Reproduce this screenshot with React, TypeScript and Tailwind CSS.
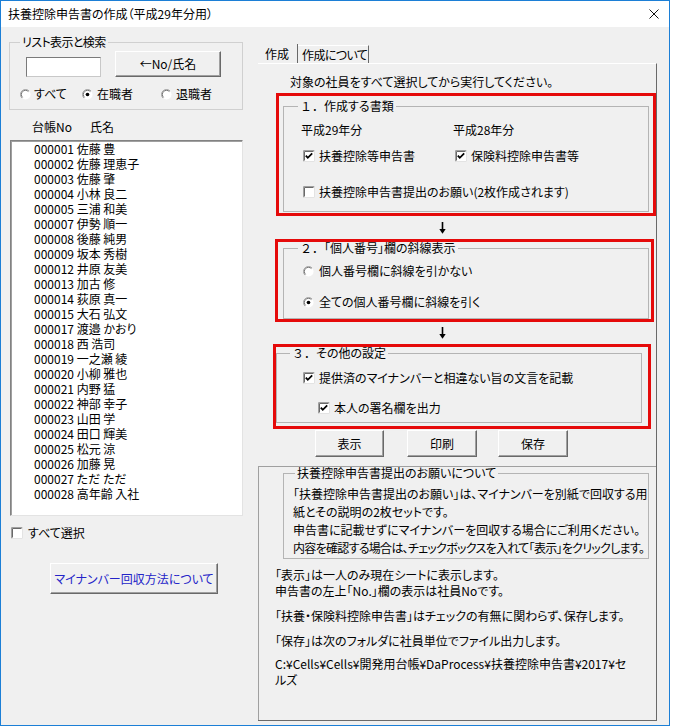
import React from 'react';

const employees: [string, string][] = [
  ['000001', '佐藤 豊'],
  ['000002', '佐藤 理恵子'],
  ['000003', '佐藤 肇'],
  ['000004', '小林 良二'],
  ['000005', '三浦 和美'],
  ['000007', '伊勢 順一'],
  ['000008', '後藤 純男'],
  ['000009', '坂本 秀樹'],
  ['000012', '井原 友美'],
  ['000013', '加古 修'],
  ['000014', '荻原 真一'],
  ['000015', '大石 弘文'],
  ['000017', '渡邉 かおり'],
  ['000018', '西 浩司'],
  ['000019', '一之瀬 綾'],
  ['000020', '小柳 雅也'],
  ['000021', '内野 猛'],
  ['000022', '神部 幸子'],
  ['000023', '山田 学'],
  ['000024', '田口 輝美'],
  ['000025', '松元 涼'],
  ['000026', '加藤 晃'],
  ['000027', 'ただ ただ'],
  ['000028', '高年齢 入社'],
];

const CheckBox: React.FC<{ checked?: boolean }> = ({ checked }) => (
  <svg width="12" height="12" viewBox="0 0 12 12" className="shrink-0">
    <rect x="0" y="0" width="12" height="12" fill="#ffffff" />
    <path d="M0.5 11.5V0.5H11.5" stroke="#a0a0a0" fill="none" />
    <path d="M1.5 10.5V1.5H10.5" stroke="#696969" fill="none" />
    <path d="M0.5 11.5H11.5V0.5" stroke="#e3e3e3" fill="none" />
    {checked && <path d="M2.8 5.6L4.8 7.8L9.2 3.4" stroke="#000000" strokeWidth="1.8" fill="none" />}
  </svg>
);

const Radio: React.FC<{ checked?: boolean }> = ({ checked }) => (
  <svg width="11" height="11" viewBox="0 0 12 12" className="shrink-0">
    <circle cx="6" cy="6" r="5.5" fill="#ffffff" />
    <path d="M2.1 9.9A5.5 5.5 0 0 1 9.9 2.1" stroke="#a0a0a0" fill="none" />
    <path d="M2.8 9.2A4.5 4.5 0 0 1 9.2 2.8" stroke="#696969" fill="none" />
    {checked && <circle cx="6" cy="6" r="2" fill="#000000" />}
  </svg>
);

const DownArrow = () => (
  <svg width="9" height="12" viewBox="0 0 9 12" className="ml-[180px]">
    <path d="M4.5 0V8" stroke="#000000" strokeWidth="1.6" />
    <path d="M1.3 7H7.7L4.5 11.8Z" fill="#000000" />
  </svg>
);

const Btn: React.FC<{ className?: string; children: React.ReactNode }> = ({ className, children }) => (
  <div
    className={`flex items-center justify-center bg-[#f0f0f0] border border-t-white border-l-white border-r-[#696969] border-b-[#696969] shadow-[inset_-1px_-1px_0_#a0a0a0] whitespace-nowrap ${className ?? ''}`}
  >
    {children}
  </div>
);

const Row: React.FC<{ className?: string; children: React.ReactNode }> = ({ className, children }) => (
  <div className={`flex items-center h-[14px] leading-[14px] whitespace-nowrap ${className ?? ''}`}>{children}</div>
);

export default function App() {
  return (
    <div className="w-[673px] h-[728px] bg-white overflow-hidden text-[12px] text-black font-['Noto_Sans_CJK_JP','Noto_Sans',sans-serif] [font-feature-settings:'palt']">
      <div className="w-[670px] h-[726px] border border-[#1c7fd6] bg-[#f0f0f0] flex flex-col">
        {/* title bar */}
        <div className="h-[26px] bg-white flex items-center justify-between pl-[7px] pr-[10px] shrink-0">
          <span className="leading-[14px]">扶養控除申告書の作成（平成29年分用）</span>
          <svg width="10" height="10" viewBox="0 0 10 10">
            <path d="M0.5 0.5L9.5 9.5M9.5 0.5L0.5 9.5" stroke="#111111" strokeWidth="1" />
          </svg>
        </div>

        <div className="flex flex-1">
          {/* left column */}
          <div className="ml-[8px] w-[234px] flex flex-col">
            <fieldset className="mt-[8px] border border-[#d0d0d0] pb-[8px]">
              <legend className="ml-[10px] px-[2px] leading-[14px] tracking-[-0.6px]">リスト表示と検索</legend>
              <div className="flex items-start mt-[2px]">
                <div className="ml-[16px] mt-[6px] w-[75px] h-[20px] bg-white border border-t-[#7a7a7a] border-l-[#7a7a7a] border-r-[#c8c8c8] border-b-[#c8c8c8]" />
                <Btn className="ml-[14px] w-[106px] h-[26px]">←No/氏名</Btn>
              </div>
              <Row className="mt-[10px]">
                <div className="ml-[10px] w-[62px] flex items-center gap-[3px]">
                  <Radio />
                  <span>すべて</span>
                </div>
                <div className="w-[79px] flex items-center gap-[4px]">
                  <Radio checked />
                  <span>在職者</span>
                </div>
                <div className="flex items-center gap-[4px]">
                  <Radio />
                  <span>退職者</span>
                </div>
              </Row>
            </fieldset>

            <Row className="mt-[10px] pl-[23px]">
              <span className="w-[58px]">台帳No</span>
              <span>氏名</span>
            </Row>

            <div className="mt-[6px] ml-[1px] w-[233px] h-[376px] bg-white border border-t-[#828282] border-l-[#828282] border-r-[#e3e3e3] border-b-[#e3e3e3] shadow-[inset_1px_1px_0_#a0a0a0] pl-[23px]">
              {employees.map(([no, name]) => (
                <div key={no} className="h-[15px] leading-[15px] whitespace-nowrap">
                  {no} {name}
                </div>
              ))}
            </div>

            <Row className="mt-[10px] ml-[2px] gap-[5px]">
              <CheckBox />
              <span>すべて選択</span>
            </Row>

            <Btn className="mt-[23px] ml-[41px] w-[168px] h-[31px] text-[#2424c8]">マイナンバー回収方法について</Btn>
          </div>

          {/* right column */}
          <div className="ml-[15px] w-[399px] flex flex-col">
            <div className="mt-[17px] h-[19px] flex items-end whitespace-nowrap">
              <div className="w-[40px] h-[19px] pl-[7px] leading-[19px] border-r border-r-[#696969]">作成</div>
              <div className="w-[71px] h-[18px] pl-[4px] leading-[18px] tracking-[-0.6px] border-t border-t-white border-r border-r-[#696969]">作成について</div>
            </div>

            <div className="h-[658px] flex flex-col border-t border-t-white border-r border-r-[#696969] border-b border-b-[#696969]">
              <Row className="mt-[11px] pl-[32px]">対象の社員をすべて選択してから実行してください。</Row>

              {/* 1 */}
              <div className="mt-[4px] ml-[18px] w-[380px] h-[123px] border-[3px] border-[#e50a0a]">
                <fieldset className="mt-[3px] ml-[4px] w-[366px] border border-[#b4b4b4] pb-[12px]">
                  <legend className="ml-[14px] px-[2px] leading-[14px]">
                    <span className="[font-feature-settings:normal]">１．</span>作成する書類
                  </legend>
                  <Row className="mt-[10px] pl-[17px]">
                    <span className="w-[152px]">平成29年分</span>
                    <span>平成28年分</span>
                  </Row>
                  <Row className="mt-[12px] pl-[19px]">
                    <div className="w-[152px] flex items-center gap-[4px]">
                      <CheckBox checked />
                      <span>扶養控除等申告書</span>
                    </div>
                    <div className="flex items-center gap-[4px]">
                      <CheckBox checked />
                      <span>保険料控除申告書等</span>
                    </div>
                  </Row>
                  <Row className="mt-[22px] pl-[19px] gap-[4px]">
                    <CheckBox />
                    <span>扶養控除申告書提出のお願い(2枚作成されます)</span>
                  </Row>
                </fieldset>
              </div>

              <div className="mt-[6px] h-[12px] flex">
                <DownArrow />
              </div>

              {/* 2 */}
              <div className="mt-[5px] ml-[17px] w-[379px] h-[83px] border-[3px] border-[#e50a0a]">
                <fieldset className="ml-[5px] w-[366px] border border-[#b4b4b4] pb-[9px]">
                  <legend className="ml-[14px] px-[2px] leading-[12px]">
                    <span className="[font-feature-settings:normal]">２．</span>「個人番号」欄の斜線表示
                  </legend>
                  <Row className="mt-[10px] pl-[19px] gap-[5px]">
                    <Radio />
                    <span>個人番号欄に斜線を引かない</span>
                  </Row>
                  <Row className="mt-[17px] pl-[19px] gap-[5px]">
                    <Radio checked />
                    <span>全ての個人番号欄に斜線を引く</span>
                  </Row>
                </fieldset>
              </div>

              <div className="mt-[5px] h-[12px] flex">
                <DownArrow />
              </div>

              {/* 3 */}
              <div className="mt-[5px] ml-[15px] w-[378px] h-[85px] border-[3px] border-[#e50a0a]">
                <fieldset className="w-[366px] border border-[#b4b4b4] pb-[7px]">
                  <legend className="ml-[13px] px-[2px] leading-[12px]">
                    <span className="[font-feature-settings:normal]">３．</span>その他の設定
                  </legend>
                  <Row className="mt-[12px] pl-[26px] gap-[4px]">
                    <CheckBox checked />
                    <span>提供済のマイナンバーと相違ない旨の文言を記載</span>
                  </Row>
                  <Row className="mt-[16px] pl-[41px] gap-[4px]">
                    <CheckBox checked />
                    <span>本人の署名欄を出力</span>
                  </Row>
                </fieldset>
              </div>

              <div className="mt-[1px] flex">
                <Btn className="ml-[57px] w-[69px] h-[27px]">表示</Btn>
                <Btn className="ml-[23px] w-[70px] h-[27px]">印刷</Btn>
                <Btn className="ml-[21px] w-[70px] h-[27px]">保存</Btn>
              </div>

              {/* lower section */}
              <div className="mt-[9px] flex-1 border-t border-t-[#a0a0a0] border-l border-l-[#a0a0a0]">
                <fieldset className="ml-[24px] w-[360px] border border-[#b4b4b4] pb-[1px]">
                  <legend className="ml-[11px] px-[2px] leading-[12px]">扶養控除申告書提出のお願いについて</legend>
                  <div className="mt-[6px] pl-[9px] leading-[18px] whitespace-nowrap">
                    <div>「扶養控除申告書提出のお願い」は、マイナンバーを別紙で回収する用</div>
                    <div>紙とその説明の2枚セットです。</div>
                    <div>申告書に記載せずにマイナンバーを回収する場合にご利用ください。</div>
                    <div className="tracking-[-0.7px]">内容を確認する場合は、チェックボックスを入れて「表示」をクリックします。</div>
                  </div>
                </fieldset>

                <div className="pl-[16px] leading-[16px] whitespace-nowrap">
                  <div className="mt-[8px]">
                    <div>「表示」は一人のみ現在シートに表示します。</div>
                    <div>申告書の左上「No.」欄の表示は社員Noです。</div>
                  </div>
                  <div className="mt-[9px]">「扶養・保険料控除申告書」はチェックの有無に関わらず、保存します。</div>
                  <div className="mt-[9px]">「保存」は次のフォルダに社員単位でファイル出力します。</div>
                  <div className="mt-[7px]">
                    <div>C:¥Cells¥Cells¥開発用台帳¥DaProcess¥扶養控除申告書¥2017¥セ</div>
                    <div>ルズ</div>
                  </div>
                </div>
              </div>
            </div>
          </div>
        </div>
      </div>
    </div>
  );
}
